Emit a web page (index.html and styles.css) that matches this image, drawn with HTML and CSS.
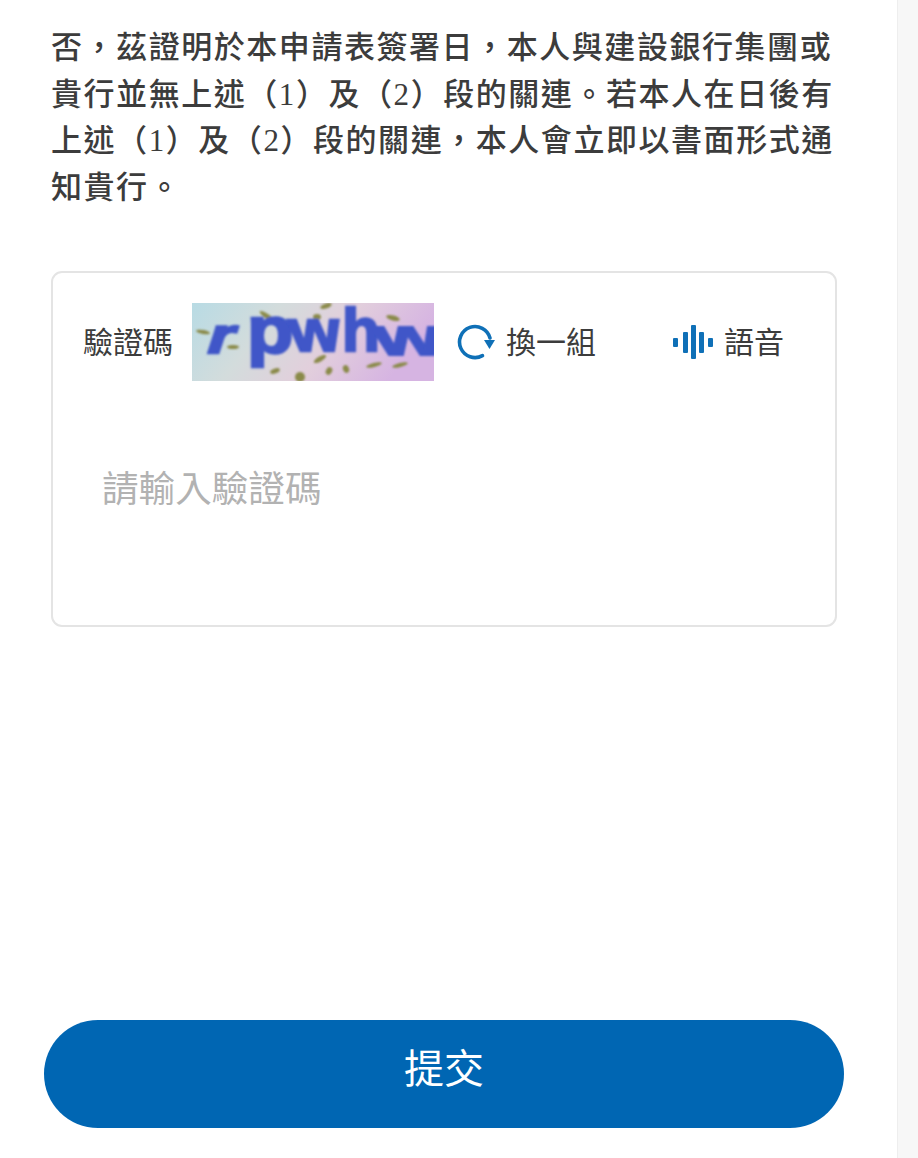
FILE: index.html
```html
<!DOCTYPE html>
<html lang="zh-Hant">
<head>
<meta charset="utf-8">
<title>驗證碼</title>
<link rel="stylesheet" href="styles.css">
</head>
<body>
<div class="page">
  <main class="content">
    <p class="declaration">否&#xFF0C;茲證明於本申請表簽署日&#xFF0C;本人與建設銀行集團或<br>貴行並無上述&#xFF08;<span class="num">1</span>&#xFF09;及&#xFF08;<span class="num">2</span>&#xFF09;段的關連。若本人在日後有<br>上述&#xFF08;<span class="num">1</span>&#xFF09;及&#xFF08;<span class="num">2</span>&#xFF09;段的關連&#xFF0C;本人會立即以書面形式通<br>知貴行。</p>
    <section class="card">
      <div class="captcha-row">
        <span class="captcha-label">驗證碼</span>
        <svg class="captcha-img" width="242" height="78" viewBox="0 0 242 78">
          <defs>
            <linearGradient id="bg" x1="0" y1="0" x2="1" y2="0.25">
              <stop offset="0" stop-color="#b8dbe4"/>
              <stop offset="0.35" stop-color="#d3dcdc"/>
              <stop offset="0.65" stop-color="#e2cfdc"/>
              <stop offset="1" stop-color="#d6b4e2"/>
            </linearGradient>
            <filter id="soft" x="-5%" y="-5%" width="110%" height="110%"><feGaussianBlur stdDeviation="1"/></filter>
          </defs>
          <rect width="242" height="78" fill="url(#bg)"/>
          <g filter="url(#soft)">
            <g fill="#8a8a4a">
              <ellipse cx="134" cy="3" rx="6" ry="2.5" transform="rotate(-20 134 3)"/>
              <ellipse cx="76" cy="14" rx="10" ry="2.5" transform="rotate(35 76 14)"/>
              <ellipse cx="125" cy="14" rx="4" ry="3"/>
              <ellipse cx="201" cy="15" rx="7" ry="2.5" transform="rotate(15 201 15)"/>
              <ellipse cx="11" cy="29" rx="7" ry="2" transform="rotate(10 11 29)"/>
              <ellipse cx="41" cy="44" rx="6" ry="2"/>
              <ellipse cx="128" cy="56" rx="7" ry="2.5" transform="rotate(-30 128 56)"/>
              <ellipse cx="182" cy="62" rx="8" ry="2" transform="rotate(-15 182 62)"/>
              <ellipse cx="208" cy="62" rx="8" ry="2" transform="rotate(-15 208 62)"/>
              <ellipse cx="83" cy="68" rx="5" ry="2.5" transform="rotate(-20 83 68)"/>
              <ellipse cx="137" cy="68" rx="3" ry="4" transform="rotate(30 137 68)"/>
              <ellipse cx="154" cy="66" rx="3" ry="4" transform="rotate(-20 154 66)"/>
              <ellipse cx="108" cy="74" rx="5" ry="5"/>
            </g>
            <g class="captcha-glyphs">
              <text transform="translate(12 50) skewX(-18) scale(1.35 1)" class="glyph-r">r</text>
              <text transform="translate(55 50) scale(1.15 1)" class="glyph-p">p</text>
              <text transform="translate(100 48) skewX(8) scale(1.05 0.95)" class="glyph-w">w</text>
              <text transform="translate(150 48)" class="glyph-h">h</text>
              <text transform="translate(186 52) skewX(12) scale(1.4 0.85)" class="glyph-w">w</text>
            </g>
          </g>
        </svg>
        <button class="action action-refresh" type="button">
          <svg class="icon" width="40" height="40" viewBox="0 0 40 40" fill="none">
            <path d="M26.5 33.6A15.5 15.5 0 1 1 34 16" stroke="#0f70b7" stroke-width="3.6" stroke-linecap="round"/>
            <path d="M28 18h11l-5.500 9z" fill="#0f70b7"/>
          </svg>
          <span class="action-text">換一組</span>
        </button>
        <button class="action action-voice" type="button">
          <svg class="icon" width="40" height="36" viewBox="0 0 40 36" fill="#0f70b7">
            <rect x="0" y="14" width="5" height="9" rx="1"/>
            <rect x="10" y="8" width="5" height="21" rx="1"/>
            <rect x="18" y="1" width="5" height="34" rx="1"/>
            <rect x="26" y="8" width="5" height="21" rx="1"/>
            <rect x="35" y="14" width="5" height="9" rx="1"/>
          </svg>
          <span class="action-text">語音</span>
        </button>
      </div>
      <input class="captcha-input" type="text" placeholder="請輸入驗證碼">
    </section>
  </main>
  <div class="footer">
    <button class="submit" type="button">提交</button>
  </div>
</div>
<div class="scrollbar"></div>
</body>
</html>
```
FILE: styles.css
```css
* { box-sizing: border-box; }
html, body { margin: 0; padding: 0; height: 1158px; overflow: hidden; background: #fff; }
body {
  display: flex;
  font-family: "Noto Sans CJK TC", "Noto Sans", sans-serif;
  color: #3a3a3a;
}
.page {
  width: 897px;
  height: 1158px;
  display: flex;
  flex-direction: column;
  padding-top: 22px;
}
.content { padding: 0 45px 0 51px; flex: 1; }
.declaration {
  margin: 0;
  width: 800px;
  height: 196px;
  font-size: 31px;
  line-height: 46.7px;
  letter-spacing: 1.55px;
  font-weight: 500;
  color: #3c3c3c;
  white-space: nowrap;
}
.num { font-family: "Liberation Serif", serif; font-weight: 400; line-height: 0; }
.card {
  margin-top: 53px;
  width: 786px;
  height: 356px;
  border: 2px solid #e4e4e4;
  border-radius: 11px;
  padding: 30px 0 0 30px;
}
.captcha-row { display: flex; align-items: center; height: 78px; }
.captcha-label { font-size: 30px; width: 109px; flex: none; color: #3c3c3c; padding-bottom: 5px; }
.captcha-img { display: block; flex: none; }
.captcha-glyphs text { font-family: "Liberation Sans", sans-serif; font-weight: 700; fill: #3f56c8; stroke: #3f56c8; stroke-width: 2.5px; }
.glyph-r { font-size: 50px; }
.glyph-p { font-size: 66px; }
.glyph-w { font-size: 62px; }
.glyph-h { font-size: 62px; }
.action {
  display: flex;
  align-items: center;
  border: 0;
  background: none;
  padding: 0;
  font: inherit;
  font-size: 30px;
  color: #3c3c3c;
  flex: none;
}
.action-text { padding-bottom: 4px; }
.action-refresh { margin-left: 22px; gap: 10px; width: 217px; }
.action-voice { gap: 11px; }
.captcha-input {
  display: block;
  margin: 70px 0 0 19px;
  width: 700px;
  height: 70px;
  border: 0;
  outline: 0;
  padding: 0;
  font: inherit;
  font-size: 36.6px;
  background: transparent;
}
.captcha-input::placeholder { color: #b2b2b2; opacity: 1; }
.footer { padding: 0 53px 30px 44px; }
.submit {
  display: block;
  width: 800px;
  height: 108px;
  border: 0;
  border-radius: 54px;
  background: #0066b3;
  color: #fff;
  font: inherit;
  font-size: 40px;
  padding: 0 0 17px;
}
.scrollbar {
  width: 21px;
  height: 1158px;
  background: #f7f7f7;
  border-left: 1px solid #eeeeee;
  flex: none;
}
```
